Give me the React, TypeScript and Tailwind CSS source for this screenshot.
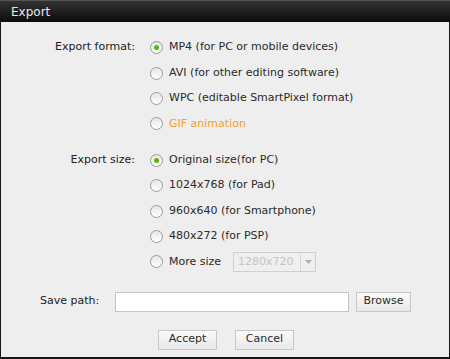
import React from "react";

function Radio({ checked }: { checked?: boolean }) {
  return (
    <span className="relative inline-flex h-[13px] w-[13px] shrink-0 items-center justify-center rounded-full border border-[#9a9a9a] bg-gradient-to-b from-[#e6e6e6] to-white">
      {checked && <span className="h-[5px] w-[5px] rounded-full bg-[#55b80a]" />}
    </span>
  );
}

function Option({ label, checked, orange }: { label: string; checked?: boolean; orange?: boolean }) {
  return (
    <div className="flex h-[25.4px] items-center">
      <Radio checked={checked} />
      <span className={`ml-[6px] ${orange ? "text-[#f4a12b]" : "text-[#2a2a2a]"}`}>{label}</span>
    </div>
  );
}

function Btn({ children, w }: { children: React.ReactNode; w: string }) {
  return (
    <div className={`flex h-[20px] ${w} items-center justify-center border border-[#c8c8c8] bg-gradient-to-b from-[#fafafa] to-[#e9e9e9] text-[#2a2a2a]`}>
      {children}
    </div>
  );
}

export default function App() {
  return (
    <div
      className="flex h-[359px] w-[450px] flex-col text-[11px]"
      style={{ fontFamily: '"DejaVu Sans", sans-serif' }}
    >
      <div className="flex h-[22px] items-center border-t border-[#555] bg-gradient-to-b from-[#333] to-[#0c0c0c] pl-[11px] text-[12px] text-[#e8e8e8]">
        Export
      </div>
      <div className="flex flex-1 flex-col border-x border-b-2 border-[#161616] bg-[#eeeeee]">
        <div className="mt-[13px] flex">
          <div className="flex h-[25.4px] w-[134px] items-center justify-end text-[#222]">Export format:</div>
          <div className="ml-[15px] flex flex-col">
            <Option label="MP4 (for PC or mobile devices)" checked />
            <Option label="AVI (for other editing software)" />
            <Option label="WPC (editable SmartPixel format)" />
            <Option label="GIF animation" orange />
          </div>
        </div>
        <div className="mt-[11px] flex">
          <div className="flex h-[25.5px] w-[134px] items-center justify-end text-[#222]">Export size:</div>
          <div className="ml-[15px] flex flex-col">
            <Option label="Original size(for PC)" checked />
            <Option label="1024x768 (for Pad)" />
            <Option label="960x640 (for Smartphone)" />
            <Option label="480x272 (for PSP)" />
            <div className="flex h-[25.5px] items-center">
              <Radio />
              <span className="ml-[6px] text-[#2a2a2a]">More size</span>
              <div className="ml-[12px] flex h-[20px] w-[83px] border border-[#d0d0d0] bg-[#efefef]">
                <div className="flex flex-1 items-center pl-[4px] text-[#c4c4c4]">1280x720</div>
                <div className="flex w-[15px] items-center justify-center border-l border-[#d6d6d6]">
                  <svg width="7" height="4" viewBox="0 0 7 4">
                    <path d="M0 0h7L3.5 4z" fill="#b0b0b0" />
                  </svg>
                </div>
              </div>
            </div>
          </div>
        </div>
        <div className="mt-[17px] flex h-[20px] items-center">
          <div className="ml-[39px] w-[75px] text-[#222]">Save path:</div>
          <div className="h-[20px] w-[234px] border border-[#c4c4c4] bg-white" />
          <div className="ml-[7px]">
            <Btn w="w-[55px]">Browse</Btn>
          </div>
        </div>
        <div className="mt-[18px] flex justify-center gap-[18px] pl-[2px]">
          <Btn w="w-[59px]">Accept</Btn>
          <Btn w="w-[59px]">Cancel</Btn>
        </div>
      </div>
    </div>
  );
}
